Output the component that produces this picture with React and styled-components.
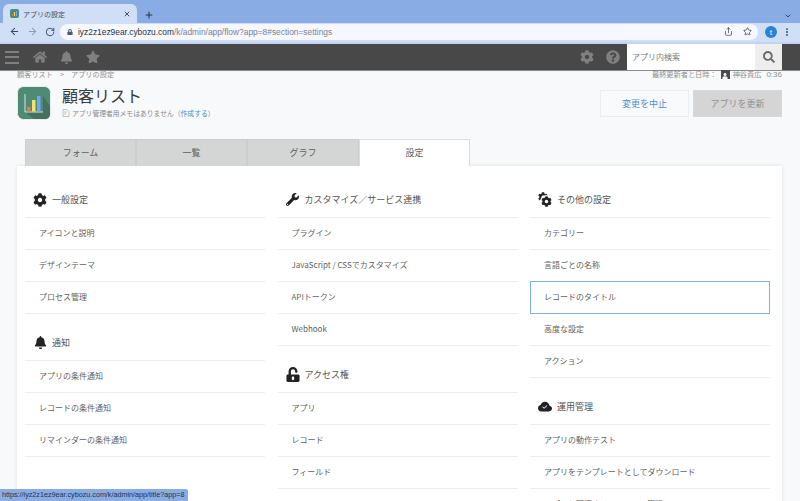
import React from 'react';
import styled, { createGlobalStyle } from 'styled-components';
import { ArrowLeft, ArrowRight, RotateCw, Star, Share, X, Plus, ChevronDown, EllipsisVertical } from 'lucide-react';
import { FaLock, FaHome, FaBell, FaStar, FaCog, FaQuestionCircle, FaSearch, FaWrench, FaUnlockAlt, FaUser } from 'react-icons/fa';
import { BsCloudCheckFill } from 'react-icons/bs';

const GlobalStyle = createGlobalStyle`
    html, body {
        margin: 0;
        height: 501px;
        overflow: hidden;
        background: #f7f9fa;
        font-family: 'Noto Sans CJK JP', 'Liberation Sans', sans-serif;
    }
    * { box-sizing: border-box; }
`;

const Window = styled.div`
    position: relative;
    width: 800px;
    height: 501px;
    overflow: hidden;
`;

const TabStrip = styled.div`
    display: flex;
    align-items: flex-end;
    height: 23px;
    padding-left: 3px;
    background: #8aace4;
`;

const BrowserTab = styled.div`
    display: flex;
    align-items: center;
    width: 134px;
    height: 19px;
    padding: 0 6px 0 7px;
    border-radius: 6px 6px 0 0;
    background: #d0def6;
    color: #4a4f57;
    font-size: 7px;
`;

const Favicon = styled.div`
    display: flex;
    align-items: flex-end;
    justify-content: center;
    gap: 1px;
    width: 9px;
    height: 9px;
    margin-right: 4px;
    padding-bottom: 2px;
    border-radius: 2px;
    background: #4f8a74;
`;

const FaviconBar = styled.span`
    width: 1px;
    height: ${props => props.$h}px;
    background: ${props => props.$c};
`;

const TabTitle = styled.span`
    flex: 1;
`;

const StripButton = styled.div`
    display: flex;
    margin-left: ${props => props.$left || 0}px;
    margin-right: ${props => props.$right || 0}px;
    padding-bottom: 3px;
    color: #26324a;
`;

const Toolbar = styled.div`
    display: flex;
    align-items: center;
    height: 21px;
    padding: 2px 0 4px 5px;
    border-bottom: 2px solid #c3d3f0;
    background: #d0def6;
    color: #3c4658;
`;

const NavButton = styled.div`
    display: flex;
    justify-content: center;
    width: 18px;
    color: ${props => props.$dim ? '#8d9ab2' : '#3c4658'};
`;

const AddressPill = styled.div`
    display: flex;
    align-items: center;
    width: 698px;
    height: 16px;
    margin: 0 7px 0 1px;
    padding: 0 6px 0 7px;
    border-radius: 8px;
    background: #f5f8fe;
    font-family: 'Liberation Sans', sans-serif;
    font-size: 8.4px;
`;

const Url = styled.span`
    flex: 1;
    margin-left: 5px;
    color: #7d838e;
`;

const Domain = styled.span`
    color: #2e3440;
`;

const PillIcon = styled.div`
    display: flex;
    margin-left: 10px;
    color: #454b57;
`;

const Avatar = styled.div`
    display: flex;
    align-items: center;
    justify-content: center;
    width: 12px;
    height: 12px;
    border-radius: 50%;
    background: #2a82d2;
    color: #fff;
    font-size: 7px;
`;

const MenuDots = styled.div`
    display: flex;
    margin-left: 5px;
`;

const AppBar = styled.div`
    display: flex;
    align-items: center;
    height: 27px;
    padding-left: 5px;
    border-bottom: 1px solid #8b8b8b;
    background: #484848;
    color: #808080;
`;

const Hamburger = styled.div`
    display: flex;
    flex-direction: column;
    justify-content: space-between;
    width: 14px;
    height: 13px;
    margin-right: 14px;
`;

const HamburgerLine = styled.span`
    height: 2px;
    background: #808080;
`;

const BarIcon = styled.div`
    display: flex;
    width: 14px;
    margin-right: ${props => props.$gap}px;
`;

const Spacer = styled.div`
    flex: 1;
`;

const SearchBox = styled.div`
    display: flex;
    align-self: stretch;
    width: 155px;
    margin: 0 18px 0 0;
`;

const SearchInput = styled.div`
    display: flex;
    align-items: center;
    flex: 1;
    padding: 0 0 1px 5px;
    background: #fff;
    color: #7a7a7a;
    font-size: 8px;
`;

const SearchButton = styled.div`
    display: flex;
    align-items: center;
    justify-content: center;
    width: 27px;
    background: #eeeeee;
    color: #6d6d6d;
`;

const Page = styled.div`
    padding: 0 18px 0 17px;
`;

const MetaRow = styled.div`
    display: flex;
    justify-content: space-between;
    align-items: center;
    height: 8px;
    margin-top: -1px;
    color: #929292;
    font-size: 7.2px;
`;

const Crumb = styled.span`
    margin: 0 7px;
`;

const Updated = styled.div`
    display: flex;
    align-items: center;
`;

const UserIcon = styled.span`
    display: flex;
    align-items: flex-end;
    justify-content: center;
    width: 9px;
    height: 9px;
    margin: 0 3px 0 4px;
    background: #4a4a4a;
    color: #fff;
`;

const Time = styled.span`
    margin-left: 5px;
    font-family: 'Liberation Sans', sans-serif;
    font-size: 8px;
`;

const TitleRow = styled.div`
    display: flex;
    align-items: center;
    height: 36px;
    margin-top: 7px;
`;

const AppIcon = styled.svg`
    width: 34px;
    height: 34px;
    margin-right: 11px;
`;

const TitleBlock = styled.div`
    display: flex;
    flex-direction: column;
    flex: 1;
    padding-bottom: 3px;
`;

const AppTitle = styled.div`
    height: 20px;
    color: #3a3a3a;
    font-size: 16px;
    line-height: 20px;
`;

const Memo = styled.div`
    display: flex;
    align-items: center;
    height: 11px;
    margin-top: 2px;
    color: #8a8a8a;
    font-size: 6.8px;
`;

const MemoIcon = styled.svg`
    width: 8px;
    height: 8px;
    margin: 0 2px 0 0;
`;

const MemoLink = styled.span`
    color: #4a90d2;
`;

const ActionButton = styled.div`
    display: flex;
    align-items: center;
    justify-content: center;
    width: 89px;
    height: 27px;
    margin-left: ${props => props.$left || 0}px;
    border: 1px solid ${props => props.$primary ? '#d8d8d8' : '#ebeef0'};
    background: ${props => props.$primary ? '#d4d5d4' : '#f9fafb'};
    color: ${props => props.$primary ? '#8f8f8f' : '#4a90d2'};
    font-size: 9px;
`;

const TabBar = styled.div`
    display: flex;
    height: 27px;
    margin-top: 18px;
    padding-left: 8px;
`;

const Tab = styled.div`
    display: flex;
    align-items: center;
    justify-content: center;
    width: ${props => props.$w}px;
    padding-bottom: 2px;
    border: 1px solid ${props => props.$active ? '#dcdcdc' : '#cccecd'};
    border-bottom: 0;
    background: ${props => props.$active ? '#fff' : '#d4d6d5'};
    color: #5f5f5f;
    font-size: 9px;
`;

const Panel = styled.div`
    display: grid;
    grid-template-columns: 240px 240px 240px;
    column-gap: 12.5px;
    align-items: start;
    height: 400px;
    padding: 17px 0 0 8px;
    background: #fff;
    box-shadow: 0 0 4px rgba(0, 0, 0, 0.1);
`;

const Section = styled.section`
    margin-bottom: 12px;
`;

const SectionHead = styled.div`
    display: flex;
    align-items: center;
    height: 35px;
    padding: 0 0 1px 8px;
    border-bottom: 1px solid #efefef;
    color: #555;
    font-size: 9px;
`;

const HeadIcon = styled.span`
    display: flex;
    justify-content: center;
    width: 14px;
    margin-right: 5px;
    color: #222;
`;

const GearPair = styled.span`
    position: relative;
    width: 15px;
    height: 15px;
`;

const GearBack = styled(FaCog)`
    position: absolute;
    left: 0;
    top: 0;
`;

const GearFront = styled(FaCog)`
    position: absolute;
    right: 0;
    bottom: 0;
    border-radius: 50%;
    background: #fff;
    box-shadow: 0 0 0 1px #fff;
`;

const Row = styled.div`
    display: flex;
    align-items: center;
    height: 32px;
    padding-bottom: 2px;
    padding-left: ${props => props.$selected ? 13 : 14}px;
    border-bottom: 1px solid #efefef;
    color: #5f5f5f;
    font-size: 8px;
    ${props => props.$selected && `
        margin-top: -1px;
        height: 33px;
        border: 1px solid #7fb0e2;
    `}
`;

const StatusBubble = styled.div`
    position: absolute;
    left: 0;
    bottom: 0;
    width: 188px;
    height: 12px;
    padding-left: 2px;
    border-top-right-radius: 2px;
    background: #8aace4;
    color: #26324a;
    font-family: 'Liberation Sans', sans-serif;
    font-size: 7.2px;
    line-height: 12px;
    white-space: nowrap;
`;

const gears = (
    <GearPair>
        <GearBack size={10} />
        <GearFront size={11} />
    </GearPair>
);

const columns = [
    [
        { icon: <FaCog size={14} />, title: '一般設定', items: ['アイコンと説明', 'デザインテーマ', 'プロセス管理'] },
        { icon: <FaBell size={13} />, title: '通知', items: ['アプリの条件通知', 'レコードの条件通知', 'リマインダーの条件通知'] },
    ],
    [
        { icon: <FaWrench size={13} />, title: 'カスタマイズ／サービス連携', items: ['プラグイン', 'JavaScript / CSSでカスタマイズ', 'APIトークン', 'Webhook'] },
        { icon: <FaUnlockAlt size={15} />, title: 'アクセス権', items: ['アプリ', 'レコード', 'フィールド'] },
    ],
    [
        { icon: gears, title: 'その他の設定', items: ['カテゴリー', '言語ごとの名称', 'レコードのタイトル', '高度な設定', 'アクション'], selected: 'レコードのタイトル' },
        { icon: <BsCloudCheckFill size={16} />, title: '運用管理', items: ['アプリの動作テスト', 'アプリをテンプレートとしてダウンロード', 'アプリと関連するスペースの管理'] },
    ],
];

function BrowserChrome() {
    return (
        <>
            <TabStrip>
                <BrowserTab>
                    <Favicon>
                        <FaviconBar $h={2} $c="#e8785a" />
                        <FaviconBar $h={4} $c="#f3e36b" />
                        <FaviconBar $h={5} $c="#6fa8f0" />
                    </Favicon>
                    <TabTitle>アプリの設定</TabTitle>
                    <X size={8} strokeWidth={2.5} color="#2c3442" />
                </BrowserTab>
                <StripButton $left={7}><Plus size={10} strokeWidth={2.5} /></StripButton>
                <Spacer />
                <StripButton $right={8}><ChevronDown size={8} strokeWidth={2.5} /></StripButton>
            </TabStrip>
            <Toolbar>
                <NavButton><ArrowLeft size={11} strokeWidth={2.2} /></NavButton>
                <NavButton $dim><ArrowRight size={11} strokeWidth={2.2} /></NavButton>
                <NavButton><RotateCw size={10} strokeWidth={2.2} /></NavButton>
                <AddressPill>
                    <FaLock size={6} color="#555b66" />
                    <Url><Domain>iyz2z1ez9ear.cybozu.com</Domain>/k/admin/app/flow?app=8#section=settings</Url>
                    <PillIcon><Share size={9} /></PillIcon>
                    <PillIcon><Star size={9} strokeWidth={2.2} /></PillIcon>
                </AddressPill>
                <Avatar>t</Avatar>
                <MenuDots><EllipsisVertical size={10} strokeWidth={2.5} /></MenuDots>
            </Toolbar>
        </>
    );
}

function App() {
    return (
        <Window>
            <GlobalStyle />
            <BrowserChrome />
            <AppBar>
                <Hamburger>
                    <HamburgerLine />
                    <HamburgerLine />
                    <HamburgerLine />
                </Hamburger>
                <BarIcon $gap={13}><FaHome size={14} /></BarIcon>
                <BarIcon $gap={12}><FaBell size={13} /></BarIcon>
                <BarIcon><FaStar size={14} /></BarIcon>
                <Spacer />
                <BarIcon $gap={12}><FaCog size={14} /></BarIcon>
                <BarIcon $gap={7}><FaQuestionCircle size={14} /></BarIcon>
                <SearchBox>
                    <SearchInput>アプリ内検索</SearchInput>
                    <SearchButton><FaSearch size={12} /></SearchButton>
                </SearchBox>
            </AppBar>
            <Page>
                <MetaRow>
                    <span>顧客リスト<Crumb>&gt;</Crumb>アプリの設定</span>
                    <Updated>
                        最終更新者と日時：
                        <UserIcon><FaUser size={6} /></UserIcon>
                        神谷貴広
                        <Time>0:36</Time>
                    </Updated>
                </MetaRow>
                <TitleRow>
                    <AppIcon viewBox="0 0 34 34">
                        <rect x="0.5" y="0.5" width="33" height="33" rx="6" fill="#4f8a74" stroke="#e6ecea" />
                        <path d="M8 26L17 33H28Q33 33 33 28V20L26 10V26Z" fill="#43705f" />
                        <path d="M8 8V26H26" fill="none" stroke="#d8e4de" strokeWidth="1" />
                        <rect x="10" y="21" width="3.5" height="4.5" fill="#e8785a" />
                        <rect x="15" y="14" width="3.5" height="11.5" fill="#f3e36b" />
                        <rect x="20" y="10" width="3.5" height="15.5" fill="#6fa8f0" />
                    </AppIcon>
                    <TitleBlock>
                        <AppTitle>顧客リスト</AppTitle>
                        <Memo>
                            <MemoIcon viewBox="0 0 8 8">
                                <path d="M1 .5H5L7 2.5V7.5H1ZM2 3H5M2 5H4" fill="none" stroke="#aaa" strokeWidth=".7" />
                            </MemoIcon>
                            アプリ管理者用メモはありません（<MemoLink>作成する</MemoLink>）
                        </Memo>
                    </TitleBlock>
                    <ActionButton>変更を中止</ActionButton>
                    <ActionButton $primary $left={4}>アプリを更新</ActionButton>
                </TitleRow>
                <TabBar>
                    <Tab $w={111}>フォーム</Tab>
                    <Tab $w={111}>一覧</Tab>
                    <Tab $w={112}>グラフ</Tab>
                    <Tab $w={111} $active>設定</Tab>
                </TabBar>
                <Panel>
                    {columns.map((sections, i) => (
                        <div key={i}>
                            {sections.map(section => (
                                <Section key={section.title}>
                                    <SectionHead>
                                        <HeadIcon>{section.icon}</HeadIcon>
                                        {section.title}
                                    </SectionHead>
                                    {section.items.map(item => (
                                        <Row key={item} $selected={item === section.selected}>{item}</Row>
                                    ))}
                                </Section>
                            ))}
                        </div>
                    ))}
                </Panel>
            </Page>
            <StatusBubble>https://iyz2z1ez9ear.cybozu.com/k/admin/app/title?app=8</StatusBubble>
        </Window>
    );
}

export default App;
